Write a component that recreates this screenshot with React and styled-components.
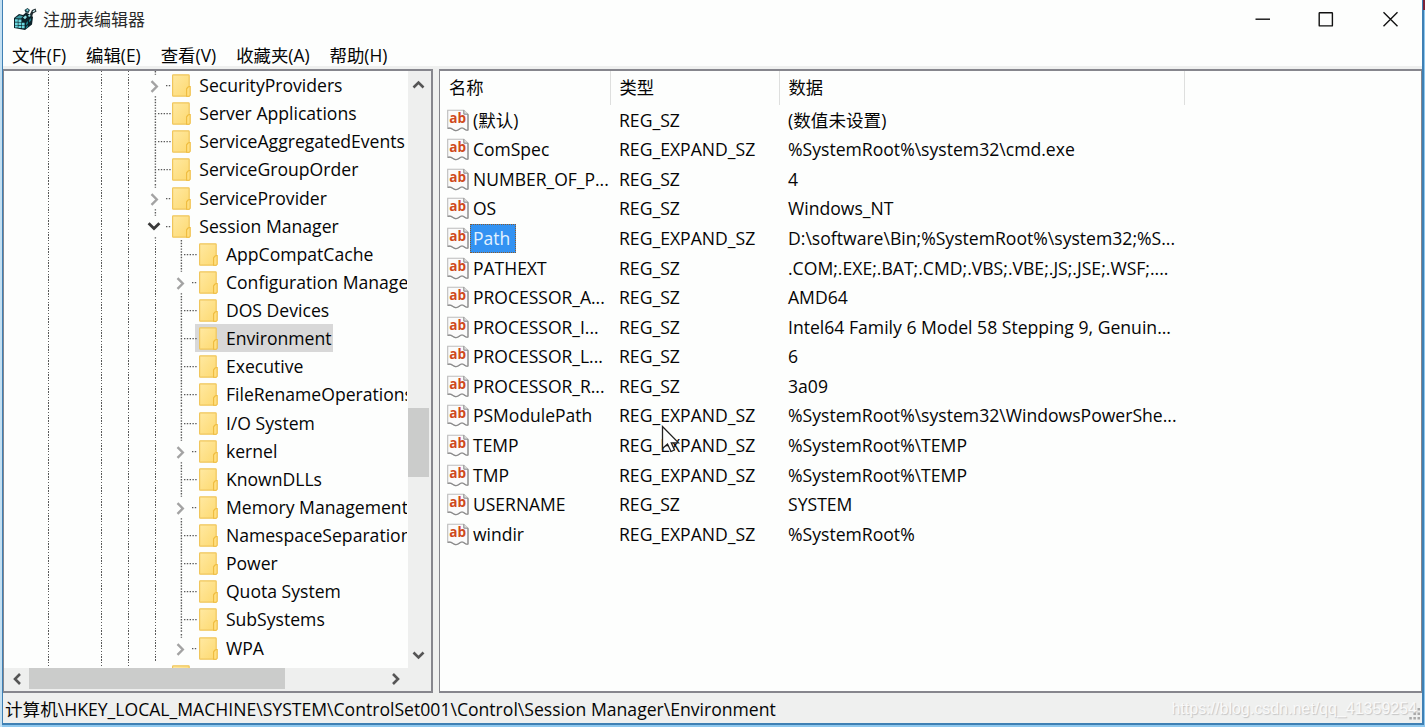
import styled, { createGlobalStyle } from 'styled-components';

// 左侧树
const tree = [
  { name: 'SecurityProviders', level: 1, state: 'closed' },
  { name: 'Server Applications', level: 1 },
  { name: 'ServiceAggregatedEvents', level: 1 },
  { name: 'ServiceGroupOrder', level: 1 },
  { name: 'ServiceProvider', level: 1, state: 'closed' },
  { name: 'Session Manager', level: 1, state: 'open' },
  { name: 'AppCompatCache', level: 2 },
  { name: 'Configuration Manager', level: 2, state: 'closed' },
  { name: 'DOS Devices', level: 2 },
  { name: 'Environment', level: 2, selected: true },
  { name: 'Executive', level: 2 },
  { name: 'FileRenameOperations', level: 2 },
  { name: 'I/O System', level: 2 },
  { name: 'kernel', level: 2, state: 'closed' },
  { name: 'KnownDLLs', level: 2 },
  { name: 'Memory Management', level: 2, state: 'closed' },
  { name: 'NamespaceSeparation', level: 2 },
  { name: 'Power', level: 2 },
  { name: 'Quota System', level: 2 },
  { name: 'SubSystems', level: 2 },
  { name: 'WPA', level: 2, state: 'closed', last: true },
];

// 右侧列表
const values = [
  ['(默认)', 'REG_SZ', '(数值未设置)'],
  ['ComSpec', 'REG_EXPAND_SZ', '%SystemRoot%\\system32\\cmd.exe'],
  ['NUMBER_OF_P...', 'REG_SZ', '4'],
  ['OS', 'REG_SZ', 'Windows_NT'],
  ['Path', 'REG_EXPAND_SZ', 'D:\\software\\Bin;%SystemRoot%\\system32;%S...'],
  ['PATHEXT', 'REG_SZ', '.COM;.EXE;.BAT;.CMD;.VBS;.VBE;.JS;.JSE;.WSF;....'],
  ['PROCESSOR_A...', 'REG_SZ', 'AMD64'],
  ['PROCESSOR_I...', 'REG_SZ', 'Intel64 Family 6 Model 58 Stepping 9, Genuin...'],
  ['PROCESSOR_L...', 'REG_SZ', '6'],
  ['PROCESSOR_R...', 'REG_SZ', '3a09'],
  ['PSModulePath', 'REG_EXPAND_SZ', '%SystemRoot%\\system32\\WindowsPowerShe...'],
  ['TEMP', 'REG_EXPAND_SZ', '%SystemRoot%\\TEMP'],
  ['TMP', 'REG_EXPAND_SZ', '%SystemRoot%\\TEMP'],
  ['USERNAME', 'REG_SZ', 'SYSTEM'],
  ['windir', 'REG_EXPAND_SZ', '%SystemRoot%'],
];

const menus = ['文件(F)', '编辑(E)', '查看(V)', '收藏夹(A)', '帮助(H)'];

function RegeditIcon() {
  return (
    <svg width="24" height="24" viewBox="0 0 24 24">
      <path d="M1 11 L6 7 L10 8 L13 5.500 L18 8 L20 10 L19 17.500 L12 23 L1 21 Z" fill="#0b2229" />
      <path d="M2 11.200 L6.500 8.200 L10 9.200 L8 11.600 Z" fill="#3d9aa3" />
      <path d="M2 12.200h2.800v2.600H2z M5.400 12.400h3v2.600H5.400z M2 15.400h2.800V18H2z M5.400 15.600h3v2.600H5.400z M9 15.800h2.600v2.600H9z M2 18.600h2.800v1.800H2z M5.400 18.900h3v2H5.400z M9 19.100h2.600v2.200H9z" fill="#6bd8df" />
      <path d="M13 16l2-2v2.600l-2 2z M16 13l2-2v2.600l-2 2z M13 20l2-2v1.800l-2 2z" fill="#1b7d88" />
      <path d="M11.500 3 l3-2 2.500 2 -1.500 3 -3-.5z" fill="#1c3c44" />
      <path d="M13 3 l1.700-1 1 1.300 -1.500 1.200z" fill="#7edce2" />
      <path d="M16 9 L19 3 L22.500 1.500 L23.500 4.500 L20 6.500 L19 10 Z" fill="#202c30" />
      <path d="M19.500 4.200 l2.300-1.500 .5 1.200 -2 1.300z" fill="#c9eef0" />
      <path d="M10 10.500 l2.500-2 1.500 1.500 -2 2.200z M15 8.500 l2-1.200 .5 1.600 -1.500 1z" fill="#8fe0e5" />
    </svg>
  );
}

function FolderIcon() {
  return (
    <Folder width="19" height="23" viewBox="0 0 19 23">
      <defs>
        <linearGradient id="folderBody" x1="0" y1="0" x2="1" y2="1">
          <stop offset="0" stopColor="#ffe9a2" />
          <stop offset="1" stopColor="#fdd970" />
        </linearGradient>
      </defs>
      <rect x="0.6" y="0.8" width="16.600" height="21.400" rx="0.6" fill="url(#folderBody)" stroke="#f0c65c" strokeWidth="1.2" />
      <path d="M17.200 12.500 h1 v8.800 l-1 1 h-2.600 v-7.500 l1.200-1.500z" fill="#ffdf80" stroke="#efbc3f" strokeWidth="1.1" />
    </Folder>
  );
}

function StringIcon() {
  return (
    <AbIcon width="22" height="23" viewBox="0 0 22 23">
      <path d="M0.700 1.200 H16.800 L21 5.200 V21 C18.500 22.300 17.500 19 15 19 C12.500 19 11.800 21.800 8.800 21.600 C5.800 21.400 5.300 18.200 0.700 19.300 Z" fill="#fbfbfb" stroke="#bcbcbc" strokeWidth="1.100" />
      <path d="M21 5.200 V21 C18.500 22.300 17.500 19 15 19 C12.500 19 11.800 21.800 8.800 21.600 C5.800 21.400 5.300 18.200 0.700 19.300" fill="none" stroke="#8b8b8b" strokeWidth="1.200" />
      <path d="M16.800 1.200 V5.200 H21" fill="#ddd" stroke="#888" strokeWidth="1" />
      <text x="2.200" y="14">ab</text>
    </AbIcon>
  );
}

// 虚线 + 展开箭头
function Branch({ state, last }) {
  return (
    <Joint width="26.700" height="28.125" viewBox="0 0 26.700 28.125">
      {state ? (
        <>
          <line x1="13.400" y1="0" x2="13.400" y2="3.800" />
          {!last && <line x1="13.400" y1="25.200" x2="13.400" y2="28.125" />}
          <line x1="24" y1="14.600" x2="29.500" y2="14.600" />
        </>
      ) : (
        <>
          <line x1="13.400" y1="0" x2="13.400" y2="28.125" />
          <line x1="16" y1="14.600" x2="29.500" y2="14.600" />
        </>
      )}
      {state === 'closed' && <Caret points="9.500,10.200 14.800,15.500 9.500,20.800" />}
      {state === 'open' && <Caret $open points="6.600,11.300 12,16.600 17.400,11.300" />}
    </Joint>
  );
}

function ScrollArrow({ points }) {
  return (
    <svg width="22" height="23" viewBox="0 0 22 23">
      <polyline points={points} fill="none" stroke="#555" strokeWidth="2.600" />
    </svg>
  );
}

export default function App() {
  return (
    <>
      <GlobalStyle />
      <Desktop>
        <Window>
          <TitleBar>
            <RegeditIcon />
            <Title>注册表编辑器</Title>
            <Controls width="146" height="16" viewBox="0 0 146 16">
              <path d="M0.500 8.200 H15" />
              <rect x="64.200" y="1.700" width="13.200" height="13.200" rx="0.500" />
              <path d="M128.500 1.200 L142.500 15.200 M142.500 1.200 L128.500 15.200" />
            </Controls>
          </TitleBar>
          <MenuBar>
            {menus.map((menu) => (
              <MenuItem key={menu}>{menu}</MenuItem>
            ))}
          </MenuBar>
          <Content>
            <TreePanel>
              <TreeTop>
                <TreeView>
                  {tree.map((item) => (
                    <TreeRow key={item.name}>
                      <Guide $line />
                      <Guide />
                      <Guide $line />
                      <Guide $line />
                      {item.level === 2 && <Guide $line />}
                      <Branch state={item.state} last={item.last} />
                      <TreeLabel $selected={item.selected}>
                        <FolderIcon />
                        <span>{item.name}</span>
                      </TreeLabel>
                    </TreeRow>
                  ))}
                  <TreeRow>
                    <Guide $line />
                    <Guide />
                    <Guide $line />
                    <Guide $line />
                    <Guide />
                    <TreeLabel>
                      <FolderIcon />
                    </TreeLabel>
                  </TreeRow>
                </TreeView>
                <VerticalBar>
                  <ScrollArrow points="5.500,16.500 10.500,11.500 15.500,16.500" />
                  <VerticalTrack>
                    <VerticalThumb />
                  </VerticalTrack>
                  <ScrollArrow points="5.500,7.500 10.500,12.500 15.500,7.500" />
                </VerticalBar>
              </TreeTop>
              <HorizontalBar>
                <ScrollArrow points="14,6 9,11 14,16" />
                <HorizontalTrack>
                  <HorizontalThumb />
                </HorizontalTrack>
                <ScrollArrow points="6,6 11,11 6,16" />
              </HorizontalBar>
            </TreePanel>
            <ListPanel>
              <ListHeader>
                <HeaderCell>名称</HeaderCell>
                <HeaderCell>类型</HeaderCell>
                <HeaderCell>数据</HeaderCell>
              </ListHeader>
              {values.map(([name, type, data]) => (
                <ListRow key={name}>
                  <NameCell>
                    <StringIcon />
                    <Name $selected={name === 'Path'}>{name}</Name>
                  </NameCell>
                  <Cell>{type}</Cell>
                  <Cell>{data}</Cell>
                </ListRow>
              ))}
            </ListPanel>
          </Content>
          <StatusBar>
            <span>计算机\HKEY_LOCAL_MACHINE\SYSTEM\ControlSet001\Control\Session Manager\Environment</span>
            <Watermark>https://blog.csdn.net/qq_41359254</Watermark>
            <Grip width="12" height="13" viewBox="0 0 12 13">
              <path d="M8.500 0h2.500v2.500h-2.500z M4.400 4.500h2.500v2.500h-2.500z M8.500 4.500h2.500v2.500h-2.500z M.3 9h2.500v2.500h-2.500z M4.400 9h2.500v2.500h-2.500z M8.500 9h2.500v2.500h-2.500z" />
            </Grip>
          </StatusBar>
        </Window>
        <Corner />
        <Cursor width="20" height="28" viewBox="0 0 20 28">
          <path d="M1.500 1.500 V23.500 L6.500 19 L10 26.500 L13.500 25 L10.300 17.800 H17.500 Z" />
        </Cursor>
      </Desktop>
    </>
  );
}

const GlobalStyle = createGlobalStyle`
  * {
    box-sizing: border-box;
  }
  body {
    margin: 0;
    overflow: hidden;
    background: #fdfefd;
  }
`;

const Desktop = styled.div`
  position: relative;
  height: 727px;
  padding: 0 1px 2px 2px;
  background: linear-gradient(to right, #c4e0f2 2px, #8fc8ee 2px);
  font-family: 'Open Sans', 'Noto Sans CJK SC', sans-serif;
  font-size: 17.6px;
  color: #050505;
  white-space: nowrap;
`;

const Window = styled.div`
  display: flex;
  flex-direction: column;
  height: 725px;
  border: solid #3f80b4;
  border-width: 0 2px 2px 1px;
  background: #eff0ef;
`;

const TitleBar = styled.div`
  display: flex;
  align-items: center;
  height: 39px;
  padding: 0 21px 1px 10px;
  background: #fdfefd;
`;

const Title = styled.div`
  flex: 1;
  padding: 1px 0 0 6px;
  font-size: 17px;
  line-height: 24px;
  color: #2a2a2a;
`;

const Controls = styled.svg`
  margin-top: -1px;
  fill: none;
  stroke: #111;
  stroke-width: 1.4;
`;

const MenuBar = styled.div`
  display: flex;
  align-items: center;
  gap: 20px;
  height: 27px;
  padding: 4px 0 0 9px;
  background: #fdfefd;
`;

const MenuItem = styled.div`
  font-size: 17.4px;
  line-height: 22px;
`;

const Content = styled.div`
  display: flex;
  gap: 6px;
  flex: 1;
  min-height: 0;
  padding-top: 3px;
`;

const TreePanel = styled.div`
  display: flex;
  flex-direction: column;
  width: 430px;
  border: solid #86868d;
  border-width: 2px 2px 2px 1px;
  background: #fdfefd;
`;

const TreeTop = styled.div`
  display: flex;
  flex: 1;
  min-height: 0;
`;

const TreeView = styled.div`
  width: 404px;
  padding-right: 1px;
  overflow: clip;
  overflow-clip-margin: content-box;
`;

const TreeRow = styled.div`
  display: flex;
  align-items: center;
  height: 28.125px;
  padding-left: 31px;
`;

const Guide = styled.div`
  flex: none;
  width: 26.7px;
  height: 28.125px;
  background: ${(p) => (p.$line ? 'repeating-linear-gradient(#5a5a5a 0 1.4px, transparent 1.4px 2.8125px) 12.8px 0 / 1.4px 100% no-repeat' : 'none')};
`;

const Joint = styled.svg`
  position: relative;
  z-index: 1;
  flex: none;
  overflow: visible;

  line {
    stroke: #5a5a5a;
    stroke-width: 1.4;
    stroke-dasharray: 1.4 1.4125;
  }
`;

const Caret = styled.polyline`
  fill: none;
  stroke: ${(p) => (p.$open ? '#3a3a3a' : '#a3a3a3')};
  stroke-width: ${(p) => (p.$open ? 2.8 : 2.4)};
`;

const TreeLabel = styled.div`
  display: flex;
  align-items: center;
  gap: 7.8px;
  height: 28px;
  padding: 0 1px 0 4px;
  background: ${(p) => (p.$selected ? '#d8d8d8' : 'none')};
`;

const Folder = styled.svg`
  flex: none;
  margin-top: 1px;
`;

const VerticalBar = styled.div`
  display: flex;
  flex-direction: column;
  align-items: flex-start;
  width: 23px;
  background: #eeefee;
`;

const VerticalTrack = styled.div`
  flex: 1;
  padding-top: 314px;
`;

const VerticalThumb = styled.div`
  width: 21px;
  height: 69px;
  background: #cbcccb;
`;

const HorizontalBar = styled.div`
  display: flex;
  height: 23px;
  padding: 0 22px 0 2px;
  background: #eeefee;
`;

const HorizontalTrack = styled.div`
  flex: 1;
  padding-left: 1px;
`;

const HorizontalThumb = styled.div`
  width: 256px;
  height: 21px;
  background: #cbcccb;
`;

const ListPanel = styled.div`
  flex: 1;
  border: solid #86868d;
  border-width: 2px 1px 2px 1px;
  background: #fdfefd;
`;

const columns = '170.5px 169px 405px';

const ListHeader = styled.div`
  display: grid;
  grid-template-columns: ${columns};
  height: 34.5px;
`;

const HeaderCell = styled.div`
  height: 34px;
  padding: 0 0 0 9px;
  border-right: 1px solid #dedfde;
  font-size: 17.3px;
  line-height: 34px;
`;

const ListRow = styled.div`
  display: grid;
  grid-template-columns: ${columns};
  align-items: center;
  height: 29.57px;
`;

const Cell = styled.div`
  padding-left: 8.5px;
  line-height: 27px;
`;

const NameCell = styled.div`
  display: flex;
  align-items: center;
  padding-left: 7px;
`;

const AbIcon = styled.svg`
  flex: none;

  text {
    font-family: 'Open Sans', sans-serif;
    font-size: 13.6px;
    font-weight: 700;
    fill: #cf4a1c;
  }
`;

const Name = styled.div`
  margin-left: 1px;
  padding: 0 ${(p) => (p.$selected ? '5px' : '0')} 0 2px;
  border: 1px dotted ${(p) => (p.$selected ? '#8a5a2c' : 'transparent')};
  background: ${(p) => (p.$selected ? '#3392f2' : 'none')};
  color: ${(p) => (p.$selected ? '#e4f2ff' : 'inherit')};
  font-size: 17.5px;
  line-height: 27px;
`;

const StatusBar = styled.div`
  display: flex;
  align-items: center;
  height: 30px;
  padding: 1px 1px 0 2px;
  background: #eff0ef;
`;

const Watermark = styled.div`
  margin-left: auto;
  font-family: 'Liberation Sans', sans-serif;
  font-size: 16px;
  line-height: 20px;
  color: #f9f9f9;
  text-shadow: 1px 1px 1px #c4c4c4;
`;

const Grip = styled.svg`
  margin: 12px 0 0 -8px;
  fill: #a9a9a9;
`;

// 右上角露出的背景窗口
const Corner = styled.div`
  position: absolute;
  top: 0;
  right: 0;
  width: 2px;
  height: 10px;
  background: #7c2238;
`;

const Cursor = styled.svg`
  position: absolute;
  left: 661px;
  top: 425px;

  path {
    fill: #fdfefd;
    stroke: #222;
    stroke-width: 1.3;
  }
`;
